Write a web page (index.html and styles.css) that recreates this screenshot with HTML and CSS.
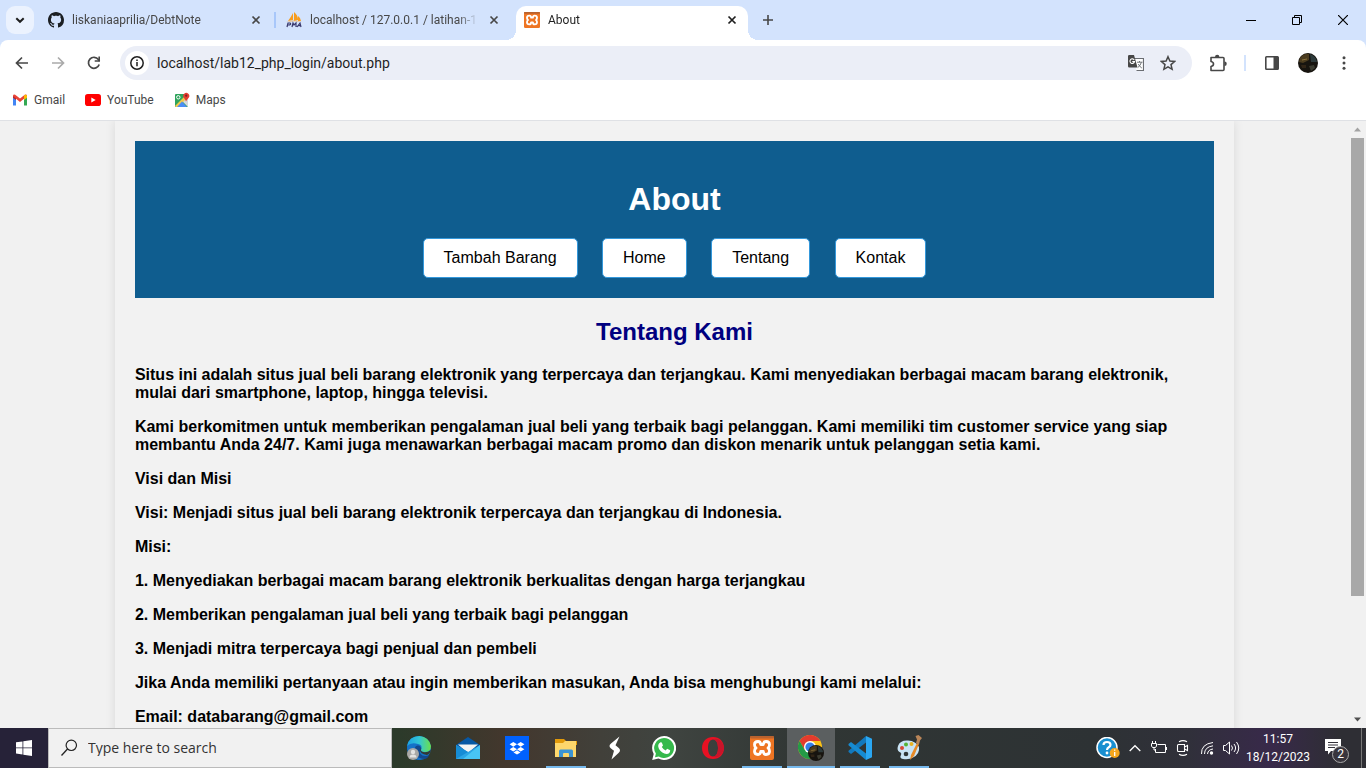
FILE: index.html
```html
<!DOCTYPE html>
<html lang="id">
<head>
<meta charset="utf-8">
<meta name="viewport" content="width=device-width, initial-scale=1">
<title>About</title>
<link rel="stylesheet" href="styles.css">
</head>
<body>
<svg width="0" height="0" class="defs" aria-hidden="true">
  <symbol id="close" viewBox="0 0 16 16"><path d="M4.500 4.500l7 7M11.500 4.500l-7 7" fill="none" stroke="currentColor" stroke-width="1.700"/></symbol>
  <symbol id="xampp" viewBox="0 0 24 24">
    <rect width="24" height="24" rx="2" fill="#ee7523"/><rect width="24" height="2.500" rx="1" fill="#b9622e"/>
    <path d="M8 5.500Q4.500 5.500 4.500 8.700 4.500 11 6 12 4.500 13 4.500 15.300 4.500 18.500 8 18.500 10.500 18.500 10.700 15.500H13.300Q13.500 18.500 16 18.500 19.500 18.500 19.500 15.300 19.500 13 18 12 19.500 11 19.500 8.700 19.500 5.500 16 5.500 13.500 5.500 13.300 8.500H10.700Q10.500 5.500 8 5.500z" fill="none" stroke="#fff" stroke-width="2.800" stroke-linejoin="round"/>
  </symbol>
  <symbol id="photo" viewBox="0 0 20 20"><circle cx="10" cy="10" r="10" fill="#17140f"/><path d="M2 5q4-5 9-4v6L5 10 1 9z" fill="#4b3c1f"/><path d="M12 1q6 2 7 8h-6z" fill="#2d3a3b"/><path d="M3 12h5v3H4z" fill="#302416"/><path d="M11 13l5-1 1 3-4 3z" fill="#3b3b30"/><path d="M4 7l5-1" stroke="#8a713b"/></symbol>
</svg>
<div class="browser">
  <header class="tabstrip">
    <button class="tab-search" aria-label="Search tabs"><svg width="12" height="12" viewBox="0 0 12 12"><path d="M2.300 4.200L6 7.800l3.700-3.600" fill="none" stroke="#1f1f1f" stroke-width="2"/></svg></button>
    <div class="tabs">
      <div class="tab">
        <svg width="16" height="16" viewBox="0 0 16 16"><path fill="#1b1f23" d="M8 0C3.580 0 0 3.580 0 8c0 3.540 2.290 6.530 5.470 7.590.4.070.55-.17.55-.38 0-.19-.01-.82-.01-1.490-2.010.37-2.530-.49-2.690-.94-.09-.23-.48-.94-.82-1.130-.28-.15-.68-.52-.01-.53.63-.01 1.080.58 1.230.82.72 1.210 1.870.87 2.330.66.070-.52.28-.87.51-1.070-1.780-.2-3.640-.89-3.640-3.950 0-.87.31-1.590.82-2.150-.08-.2-.36-1.020.08-2.120 0 0 .67-.21 2.200.82.64-.18 1.320-.27 2-.27s1.360.09 2 .27c1.530-1.040 2.200-.82 2.200-.82.44 1.100.16 1.920.08 2.120.51.56.82 1.270.82 2.150 0 3.070-1.870 3.750-3.650 3.950.29.25.54.73.54 1.480 0 1.070-.01 1.930-.01 2.200 0 .21.15.46.55.38A8.010 8.010 0 0 0 16 8c0-4.420-3.580-8-8-8z"/></svg>
        <span class="tab-title">liskaniaaprilia/DebtNote</span>
        <button class="tab-close" aria-label="Close tab"><svg width="16" height="16"><use href="#close"/></svg></button>
      </div>
      <div class="tab divided">
        <svg width="16" height="16" viewBox="0 0 16 16"><path d="M7 1q-2 4-5 8l5-1zM8 0q4 3 4 8l-4 1zM12 4q3 2 3 5h-3z" fill="#f79c1e"/><path d="M0 10q8-3 16 0-8-1.500-16 0z" fill="#f9b04c"/><path d="M1 15l1-4h2q1.500 1-.5 2H1.600M6 15l1-4 1 2 2-2v4M11 15l3-4 1 4m-3-1.300h3" fill="none" stroke="#39396e" stroke-width="1.200"/></svg>
        <span class="tab-title">localhost / 127.0.0.1 / latihan-1</span>
        <button class="tab-close" aria-label="Close tab"><svg width="16" height="16"><use href="#close"/></svg></button>
      </div>
      <div class="tab active">
        <svg width="16" height="16"><use href="#xampp"/></svg>
        <span class="tab-title">About</span>
        <button class="tab-close" aria-label="Close tab"><svg width="16" height="16"><use href="#close"/></svg></button>
      </div>
    </div>
    <button class="new-tab" aria-label="New tab"><svg width="12" height="12" viewBox="0 0 12 12"><path d="M6 1v10M1 6h10" stroke="#474747" stroke-width="1.600"/></svg></button>
    <div class="window-buttons">
      <button aria-label="Minimize"><svg width="10" height="10"><path d="M0 5.500h10" stroke="#000"/></svg></button>
      <button aria-label="Restore"><svg width="10" height="10"><path d="M.5 2.500h7v7h-7zM2.500 2.500v-2h7v7h-2" fill="none" stroke="#000"/></svg></button>
      <button aria-label="Close"><svg width="10" height="10"><path d="M0 0l10 10M10 0L0 10" stroke="#000" stroke-width="1.200"/></svg></button>
    </div>
  </header>

  <div class="chrome">
    <div class="toolbar">
      <button class="tool" aria-label="Back"><svg width="14" height="14" viewBox="0 0 14 14"><path d="M13 7H2M7 1.500L1.500 7 7 12.500" fill="none" stroke="#474747" stroke-width="1.700"/></svg></button>
      <button class="tool" aria-label="Forward" disabled><svg width="14" height="14" viewBox="0 0 14 14"><path d="M1 7h11M7 1.500L12.500 7 7 12.500" fill="none" stroke="#aaa" stroke-width="1.700"/></svg></button>
      <button class="tool" aria-label="Reload"><svg width="14" height="14" viewBox="0 0 14 14"><path d="M12.200 8.500A5.500 5.500 0 1 1 11.400 3.500L12.500 5" fill="none" stroke="#474747" stroke-width="1.700"/><path d="M13 .5v5.300H7.700V4.200h3.700V.5z" fill="#474747"/></svg></button>
      <div class="omnibox">
        <button class="site-info" aria-label="Site information"><svg width="14" height="14" viewBox="0 0 14 14"><circle cx="7" cy="7" r="6.200" fill="none" stroke="#1f1f1f" stroke-width="1.500"/><path d="M7 6v4.300M7 3.400v1.500" stroke="#1f1f1f" stroke-width="1.500"/></svg></button>
        <input class="address" type="text" aria-label="Address" value="localhost/lab12_php_login/about.php">
        <button class="omni-tool" aria-label="Translate"><svg width="16" height="16" viewBox="0 0 16 16"><path d="M6.500 3.500h9v12h-7" fill="#fff" stroke="#6a6d72" stroke-width="1.200"/><path d="M1.200 0H6l3.500 12.500H1.200A1.200 1.200 0 0 1 0 11.300V1.200A1.200 1.200 0 0 1 1.200 0z" fill="#474747"/><path d="M6.200 4.900A2.300 2.300 0 1 0 6.500 6.600H4.300" fill="none" stroke="#fff" stroke-width="1.100"/><path d="M9 7.200h5.500M11.500 6v1.200M13.300 7.500q-1 3.500-3.500 5M10.300 9q1.200 2.500 3.500 4" fill="none" stroke="#5f6368" stroke-width=".9"/></svg></button>
        <button class="omni-tool" aria-label="Bookmark this page"><svg width="16" height="16" viewBox="0 0 16 16"><path d="M8 1.700l1.900 4.400 4.700.4-3.600 3.100 1.100 4.700L8 11.800l-4.100 2.500L5 9.600 1.400 6.500l4.700-.4z" fill="none" stroke="#474747" stroke-width="1.500"/></svg></button>
      </div>
      <button class="tool" aria-label="Extensions"><svg width="18" height="18" viewBox="0 0 18 18"><path d="M2 3.500h12a1 1 0 0 1 1 1v11a1 1 0 0 1-1 1H2v-4q2.500-.5 2.500-2.500T2 7.500z" fill="none" stroke="#474747" stroke-width="1.600" stroke-linejoin="round"/><path d="M6 3a2.200 2.200 0 0 1 4.400 0zM15.500 7.500a2 2 0 0 1 0 4.500z" fill="#474747"/></svg></button>
      <span class="tool-divider"></span>
      <button class="tool" aria-label="Side panel"><svg width="16" height="16" viewBox="0 0 16 16"><rect x="1.800" y="1.800" width="12.400" height="12.400" rx=".7" fill="none" stroke="#474747" stroke-width="1.600"/><path d="M9.500 1.500H14v13H9.500z" fill="#474747"/></svg></button>
      <button class="tool" aria-label="Profile"><svg width="20" height="20"><use href="#photo"/></svg></button>
      <button class="tool" aria-label="Menu"><svg width="4" height="14" viewBox="0 0 4 14"><g fill="#474747"><circle cx="2" cy="1.700" r="1.500"/><circle cx="2" cy="7" r="1.500"/><circle cx="2" cy="12.300" r="1.500"/></g></svg></button>
    </div>
    <nav class="bookmarks" aria-label="Bookmarks">
      <a href="#gmail"><svg width="16" height="16" viewBox="0 0 16 16"><path d="M1 13.500h3v-7L1 4z" fill="#4285f4"/><path d="M12 13.500h3V4l-3 2.500z" fill="#34a853"/><path d="M1 4.300V3.800q.3-1.800 2.200-1L8 6.500l4.800-3.700q1.900-.8 2.200 1v.5L8 10z" fill="#ea4335"/><path d="M1 4l3 2.300V8L1 5.700z" fill="#c5221f"/><path d="M12 6.300V8l3-2.300V4q-.3-1.700-2-1.200L12 3.500z" fill="#fbbc04"/></svg>Gmail</a>
      <a href="#youtube"><svg width="16" height="16" viewBox="0 0 16 16"><rect y="2" width="16" height="12" rx="2.800" fill="#f00"/><path d="M6.300 5.400L10.700 8l-4.400 2.600z" fill="#fff"/></svg>YouTube</a>
      <a href="#maps"><svg width="16" height="16" viewBox="0 0 16 16"><rect x="1" y="2" width="13" height="13" rx="1" fill="#2fa45c"/><path d="M14 6v9L8 9z" fill="#d5d8dc"/><path d="M1 14L11 4l2 2-9 9H2z" fill="#f3c94b"/><path d="M3 15l5-5.500 5 5.500z" fill="#4c8df5"/><circle cx="4.300" cy="5.300" r="1.700" fill="none" stroke="#fff"/><path d="M12 9.500q-.5-2-2-3.500a3 3 0 1 1 4.500 0Q12.500 8 12 9.500z" fill="#e33d31"/><circle cx="12.200" cy="3.700" r="1.100" fill="#7b231d"/></svg>Maps</a>
    </nav>
  </div>

  <div class="viewport">
    <div class="page">
      <main class="container">
        <header class="banner">
          <h1>About</h1>
          <nav>
            <a href="#tambah">Tambah Barang</a>
            <a href="#home">Home</a>
            <a href="#tentang">Tentang</a>
            <a href="#kontak">Kontak</a>
          </nav>
        </header>
        <h2>Tentang Kami</h2>
        <p>Situs ini adalah situs jual beli barang elektronik yang terpercaya dan terjangkau. Kami menyediakan berbagai macam barang elektronik, mulai dari smartphone, laptop, hingga televisi.</p>
        <p>Kami berkomitmen untuk memberikan pengalaman jual beli yang terbaik bagi pelanggan. Kami memiliki tim customer service yang siap membantu Anda 24/7. Kami juga menawarkan berbagai macam promo dan diskon menarik untuk pelanggan setia kami.</p>
        <p>Visi dan Misi</p>
        <p>Visi: Menjadi situs jual beli barang elektronik terpercaya dan terjangkau di Indonesia.</p>
        <p>Misi:</p>
        <p>1. Menyediakan berbagai macam barang elektronik berkualitas dengan harga terjangkau</p>
        <p>2. Memberikan pengalaman jual beli yang terbaik bagi pelanggan</p>
        <p>3. Menjadi mitra terpercaya bagi penjual dan pembeli</p>
        <p>Jika Anda memiliki pertanyaan atau ingin memberikan masukan, Anda bisa menghubungi kami melalui:</p>
        <p>Email: databarang@gmail.com</p>
      </main>
    </div>
    <div class="scrollbar" aria-hidden="true">
      <svg width="17" height="17"><path d="M5 10.500l3.500-4 3.500 4z" fill="#a3a3a3"/></svg>
      <div class="track"><div class="thumb"></div></div>
      <svg width="17" height="17"><path d="M5 6.500l3.500 4 3.500-4z" fill="#505050"/></svg>
    </div>
  </div>
</div>

<footer class="taskbar">
  <button class="start" aria-label="Start"><svg width="16" height="16" viewBox="0 0 16 16"><path d="M0 2.300l6.500-.9v6.100H0zM7.300 1.300L16 0v7.500H7.300zM0 8.300h6.500v6.200L0 13.600zM7.300 8.300H16V16l-8.700-1.300z" fill="#fff"/></svg></button>
  <label class="search">
    <svg width="18" height="18" viewBox="0 0 18 18"><circle cx="11.300" cy="6.300" r="5.200" fill="none" stroke="#222" stroke-width="1.200"/><path d="M7.500 10L1.500 16.500" stroke="#222" stroke-width="1.300"/></svg>
    <input type="text" placeholder="Type here to search" aria-label="Type here to search">
  </label>
  <div class="apps">
    <button class="app" aria-label="Edge"><svg width="24" height="24" viewBox="0 0 24 24"><defs><linearGradient id="edgeTop"><stop stop-color="#1ba1e2"/><stop offset=".5" stop-color="#32c6d6"/><stop offset="1" stop-color="#6be04b"/></linearGradient></defs><circle cx="12" cy="12" r="12" fill="#1572c8"/><path d="M0 10Q2 0 12.500 0 22 1 24 10q0 6-6 6-5 0-4-3 2-4-3-5Q4 6 0 10z" fill="url(#edgeTop)"/><path d="M8 13q-2 9 10 10 3-1 4.500-4-6 2.500-9-1-2-3 1-5-1-4-4-3.500T8 13z" fill="#12498e"/><path d="M14 12q-1 3 2 4 4 1.300 8-2-1 4-4 5-7-1-7-5z" fill="#343a32"/><circle cx="6" cy="18" r="6" fill="#aaa9a7"/><circle cx="6" cy="16" r="2.200" fill="#e5e3e1"/><path d="M2.500 21.500q0-3 3.500-3t3.500 3z" fill="#e5e3e1"/></svg></button>
    <button class="app" aria-label="Mail"><svg width="24" height="24" viewBox="0 0 24 24"><path d="M0 9L12 1l12 8-12 9z" fill="#0758a5"/><path d="M2 8.500h20L12 17z" fill="#f4f4f4"/><path d="M0 9l12 7 12-7v14H0z" fill="#2ba5e5"/><path d="M24 9v14H7z" fill="#48c4f5"/><path d="M0 9l12 7-12 7z" fill="#168cd5"/></svg></button>
    <button class="app" aria-label="Dropbox"><svg width="24" height="24" viewBox="0 0 24 24"><path d="M0 0h24v24H0z" fill="#0061fe"/><path d="M8.300 6L12 8.300l-3.700 2.400-3.700-2.400zM15.700 6l3.700 2.300-3.700 2.400L12 8.300zM8.300 10.900l3.700 2.300-3.700 2.400-3.700-2.400zM15.700 10.900l3.700 2.300-3.700 2.400-3.700-2.400zM12 14.300l3.500 2.100L12 18.600l-3.500-2.200z" fill="#fff"/></svg></button>
    <button class="app running" aria-label="File Explorer"><svg width="24" height="24" viewBox="0 0 24 24"><path d="M1 3h9l2 2h11v4H1z" fill="#e29a0a"/><path d="M1 7h8l2-2h11v16H1z" fill="#fdd76c"/><path d="M5 21v-6q0-1.500 1.500-1.500h11q1.500 0 1.500 1.500v6h-4v-3q0-1-1-1h-4q-1 0-1 1v3z" fill="#3b94d4"/></svg></button>
    <button class="app" aria-label="S launcher"><svg width="24" height="24" viewBox="0 0 24 24"><path d="M16.500.5L8 7.500Q5 10 8 12.500l3 2.200L8.500 23.500 15.500 17q3-2.800 0-5.300l-3-2.400z" fill="#fff"/></svg></button>
    <button class="app" aria-label="WhatsApp"><svg width="24" height="24" viewBox="0 0 24 24"><path d="M12 0a12 12 0 1 1-5.500 22.600L.2 24l1.500-6A12 12 0 0 1 12 0z" fill="#fff"/><path d="M12 2a10 10 0 1 1-5.200 18.500L3 21.300l.9-3.700A10 10 0 0 1 12 2z" fill="#36b94c"/><path d="M8.500 6.300l1.300.2 1.200 3-1.200 1.600q1.300 2.300 3.800 3.300l1.600-1.700 3 1.500q0 3.500-3.700 3.700-4.500-.4-7.500-5-2.200-4.200 1.500-6.600z" fill="#fff"/></svg></button>
    <button class="app" aria-label="Opera"><svg width="24" height="24" viewBox="0 0 24 24"><path fill-rule="evenodd" d="M12 1c6.500 0 11 4.500 11 11s-4.500 11-11 11S1 18.500 1 12 5.500 1 12 1zm0 2.500c-3 0-5 3.500-5 8.500s2 8.500 5 8.500 5-3.500 5-8.500-2-8.500-5-8.500z" fill="#e81123"/><path d="M12 3.500q4-2 7 1 4 4 4 7.500t-4 7.500q-3 3-7 1 5 0 5-8.500t-5-8.500z" fill="#c8142a"/></svg></button>
    <button class="app running" aria-label="XAMPP"><svg width="24" height="24"><use href="#xampp"/></svg></button>
    <button class="app running current" aria-label="Chrome"><svg width="26" height="26" viewBox="0 0 26 26"><circle cx="12" cy="12" r="12" fill="#fbc116"/><path d="M1.600 6A12 12 0 0 1 22.400 6H12l-5.200 9z" fill="#e33b2e"/><path d="M1.600 6A12 12 0 0 0 12 24l5.200-9H6.800z" fill="#249a47"/><circle cx="12" cy="12" r="6" fill="#fff"/><circle cx="12" cy="12" r="4.600" fill="#357ee8"/><use href="#photo" x="10" y="10" width="16" height="16"/></svg></button>
    <button class="app running" aria-label="Visual Studio Code"><svg width="24" height="24" viewBox="0 0 24 24"><path d="M18 0v6.500L3 18l-2.500-2v-1.300z" fill="#1279bd"/><path d="M.5 8L3 6l15 11.500V24L.5 9.300z" fill="#168bd2"/><path d="M18 0l6 2.700v18.600L18 24z" fill="#2aa7f2"/></svg></button>
    <button class="app running" aria-label="Paint"><svg width="26" height="26" viewBox="0 0 26 26"><path d="M2 11Q4 5 12 5.500T23 12q1 7-6 10.500-4 2.500-10 1.500-4-1-2-4 1-2-1.500-3Q.5 15 2 11z" fill="#c9e4f5"/><circle cx="6" cy="13" r="2" fill="#d84834"/><circle cx="10" cy="9.500" r="2" fill="#54b436"/><circle cx="15.500" cy="9" r="2" fill="#e9b324"/><circle cx="10" cy="19" r="2.300" fill="#313838"/><path d="M14 25l1-5 6-12 2 1-5 12z" fill="#e78a27"/><path d="M19.500 1l3-1L26 3l-2 2.500-1 4-3-1.500 1-3.500z" fill="#b98558"/></svg></button>
  </div>
  <div class="tray">
    <button class="help" aria-label="Help"><svg width="24" height="22" viewBox="0 0 24 22"><circle cx="11" cy="10.500" r="10" fill="#198fd0" stroke="#fff" stroke-width="1.500"/><path d="M7.500 8q0-3 3.500-3t3.500 2.700q0 1.500-1.700 2.500T11 13" fill="none" stroke="#fff" stroke-width="2.200"/><circle cx="11" cy="16" r="1.400" fill="#fff"/><circle cx="18.700" cy="16" r="5" fill="#f4a51c"/><path d="M18.700 15v4M18.700 12.500v1.300" stroke="#fff" stroke-width="1.300"/></svg></button>
    <button aria-label="Show hidden icons"><svg width="12" height="8"><path d="M.7 7L6 1.700 11.300 7" fill="none" stroke="#fff" stroke-width="1.300"/></svg></button>
    <button aria-label="Battery"><svg width="16" height="16" viewBox="0 0 16 16"><path d="M6.500 4.500h8v8H4.500V9M15.500 7v3M1.500 1v2.500M4.500 1v2.500M.5 3.500h5v2.500l-1 1.500h-3l-1-1.500zM3 7.500v2.500h1.500" fill="none" stroke="#fff"/></svg></button>
    <button aria-label="Meet now"><svg width="14" height="16" viewBox="0 0 14 16"><path d="M2.500 4.500h6v7h-6q-1 0-1-1v-5q0-1 1-1zM8.500 7l3-1.500v5l-3-1.500M3 1.800Q7-.6 11 1.800M3 14.200q4 2.400 8 0" fill="none" stroke="#fff" stroke-width="1.100"/></svg></button>
    <button aria-label="Wi-Fi"><svg width="14" height="14" viewBox="0 0 14 14"><g fill="none" stroke="#fff"><path d="M1.500 13Q1 3 13 1.500"/><path d="M4.500 13Q4.500 6 13 4.800"/><path d="M7.500 13q.5-4.500 5.500-5"/></g><circle cx="11.500" cy="12" r="1.700" fill="#fff"/></svg></button>
    <button aria-label="Volume"><svg width="17" height="14" viewBox="0 0 17 14"><path d="M.5 4.500h2l4-3.500v12l-4-3.500h-2zM8.500 4.500q2 2.500 0 5M11 3q3.200 4 0 8M13.500 1q4.500 6 0 12" fill="none" stroke="#fff"/></svg></button>
    <time class="clock" datetime="2023-12-18T11:57"><span>11:57</span><span>18/12/2023</span></time>
    <button class="notices" aria-label="2 notifications"><svg width="24" height="26" viewBox="0 0 24 26"><path d="M0 4h16v12H6l-3 3.500V16H0z" fill="#fff"/><path d="M3 7.500h10M3 10h10M3 12.500h7" stroke="#33313a"/></svg><span class="badge">2</span></button>
    <span class="desktop-edge"></span>
  </div>
</footer>
</body>
</html>
```
FILE: styles.css
```css
* { box-sizing: border-box; }

body {
  margin: 0;
  height: 100vh;
  display: flex;
  flex-direction: column;
  overflow: hidden;
  font: 12px/16px Roboto, "Noto Sans", sans-serif;
  color: #1f1f1f;
}

.defs { position: absolute; }
svg { display: block; flex: none; }

button {
  display: flex;
  align-items: center;
  justify-content: center;
  flex: none;
  padding: 0;
  border: 0;
  background: none;
  color: inherit;
  font: inherit;
}

input {
  flex: 1;
  min-width: 0;
  padding: 0;
  border: 0;
  outline: 0;
  background: none;
  font: inherit;
  color: inherit;
}

a { color: inherit; text-decoration: none; }

.browser {
  flex: 1;
  min-height: 0;
  display: flex;
  flex-direction: column;
  background: #d3e3fd;
}

/* Tab strip */
.tabstrip {
  display: flex;
  align-items: center;
  height: 40px;
  padding-left: 6px;
  flex: none;
}

.tab-search {
  width: 28px;
  height: 28px;
  border-radius: 9px;
  background: #ebf2fe;
}

.tabs {
  display: flex;
  align-self: flex-end;
  gap: 6px;
  margin-left: 6px;
}

.tab {
  position: relative;
  display: flex;
  align-items: center;
  gap: 8px;
  width: 232px;
  height: 34px;
  padding: 0 8px 6px;
  color: #474747;
}

.tab-title {
  flex: 1;
  min-width: 0;
  overflow: hidden;
  white-space: nowrap;
  -webkit-mask-image: linear-gradient(90deg, #000 88%, transparent);
  mask-image: linear-gradient(90deg, #000 88%, transparent);
}

.tab.divided::before {
  content: "";
  position: absolute;
  left: -4px;
  top: 6px;
  width: 2px;
  height: 16px;
  background: #a8c7fa;
}

.tab.active {
  border-radius: 10px 10px 0 0;
  background: #fff;
  color: #1f1f1f;
}

.tab.active::before,
.tab.active::after {
  content: "";
  position: absolute;
  bottom: 0;
  width: 10px;
  height: 10px;
}

.tab.active::before {
  right: 100%;
  background: radial-gradient(circle at 0 0, transparent 10px, #fff 10px);
}

.tab.active::after {
  left: 100%;
  background: radial-gradient(circle at 100% 0, transparent 10px, #fff 10px);
}

.new-tab { width: 28px; height: 28px; margin-left: 6px; }

.window-buttons { display: flex; margin-left: auto; }
.window-buttons button { width: 46px; height: 40px; }

/* Toolbar and bookmarks */
.chrome {
  flex: none;
  border-radius: 8px 8px 0 0;
  border-bottom: 1px solid #dfe1e5;
  background: #fff;
}

.toolbar {
  display: flex;
  align-items: center;
  gap: 4px;
  padding: 6px;
}

.tool { width: 32px; height: 32px; }

.omnibox {
  flex: 1;
  display: flex;
  align-items: center;
  height: 34px;
  margin: 0 6px;
  padding: 0 8px 0 5px;
  border-radius: 17px;
  background: #ebeef7;
  font-size: 14px;
}

.site-info {
  width: 24px;
  height: 24px;
  margin-right: 8px;
  border-radius: 50%;
  background: #fff;
}

.omni-tool { width: 32px; height: 32px; }

.tool-divider {
  width: 2px;
  height: 16px;
  margin: 0 6px;
  background: #d3e3fd;
}

.bookmarks {
  display: flex;
  align-items: center;
  gap: 20px;
  padding: 6px 12px 12px;
  color: #474747;
}

.bookmarks a { display: flex; align-items: center; gap: 6px; }

/* Page */
.viewport {
  flex: 1;
  min-height: 0;
  display: flex;
  background: #f1f1f1;
}

.page {
  flex: 1;
  overflow: hidden;
  font: 16px/18px "Liberation Sans", Arial, sans-serif;
  color: #000;
}

.container {
  box-sizing: content-box;
  width: 80%;
  margin: 0 auto;
  padding: 20px;
  background: #f2f2f2;
  box-shadow: 0 0 10px rgba(0, 0, 0, 0.1);
  font-weight: bold;
}

.banner {
  padding: 20px;
  background: #0f5d8f;
  color: #fff;
  text-align: center;
}

.banner h1 { margin: 20px 0; font-size: 32px; line-height: 37px; }
.banner nav { font-weight: normal; }

.banner a {
  display: inline-block;
  margin: 0 10px;
  padding: 10px 20px;
  border: 1px solid #3498db;
  border-radius: 5px;
  background: #fff;
  color: #000;
}

.container h2 {
  margin: 20px 0;
  font-size: 24px;
  line-height: 28px;
  color: navy;
  text-align: center;
}

.container p { margin: 16px 0; }

.scrollbar {
  display: flex;
  flex-direction: column;
  width: 17px;
  background: #f1f1f1;
}

.track { flex: 1; padding: 0 2px; }
.thumb { height: 80%; background: #a8a8a8; }

/* Taskbar */
.taskbar {
  flex: none;
  display: flex;
  height: 40px;
  background: linear-gradient(90deg, #262238 0, #262238 4%, #2b3a2a 29%, #43372d 37%, #41403a 44%, #3f4440 49%, #303634 59%, #2d3234 80%, #30303a 87%, #38294a 93%, #2e2e34 98%);
  color: #fff;
}

.start { width: 48px; }

.search {
  display: flex;
  align-items: center;
  gap: 10px;
  width: 344px;
  padding-left: 11px;
  border: 1px solid #bbb;
  background: #f1f1f1;
  color: #333;
  font-family: "Open Sans", "Noto Sans", sans-serif;
  font-size: 14px;
}

.search input::placeholder { color: #333; opacity: 1; }

.apps { display: flex; gap: 1px; margin-left: 3px; }

.app { position: relative; width: 48px; }
.app.current { background: #5b5f60; }

.app.running::after {
  content: "";
  position: absolute;
  left: 4px;
  right: 4px;
  bottom: 0;
  height: 2px;
  background: #76b9ed;
}

.app.current::after { left: 0; right: 0; }

.tray { display: flex; align-items: center; margin-left: auto; }
.tray button { width: 24px; height: 40px; }
.tray .help { width: 30px; }

.clock {
  display: flex;
  flex-direction: column;
  align-items: center;
  width: 70px;
  line-height: 18px;
}

.tray .notices { position: relative; width: 48px; }

.badge {
  position: absolute;
  left: 19px;
  top: 18px;
  width: 17px;
  height: 17px;
  border: 1px solid #aaa;
  border-radius: 50%;
  background: #38353d;
  line-height: 15px;
}

.desktop-edge { width: 5px; height: 40px; border-left: 1px solid #777; }
```
